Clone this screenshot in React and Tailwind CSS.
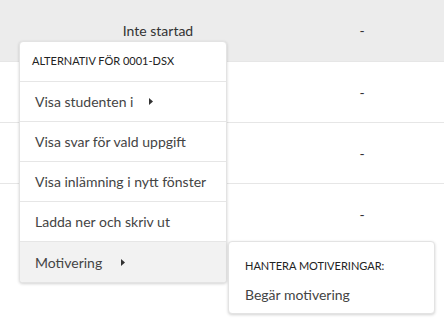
import React from 'react';

const rows = [
  { status: 'Inte startad', grade: '-', shaded: true },
  { status: '', grade: '-' },
  { status: '', grade: '-' },
  { status: '', grade: '-', last: true },
];

const Caret = () => (
  <svg width="4" height="7" viewBox="0 0 4 7" className="inline-block">
    <path d="M0 0 L4 3.5 L0 7 Z" fill="#333" />
  </svg>
);

const items = [
  { label: 'Visa studenten i', caret: true },
  { label: 'Visa svar för vald uppgift' },
  { label: 'Visa inlämning i nytt fönster' },
  { label: 'Ladda ner och skriv ut' },
];

export default function App() {
  return (
    <div
      className="relative w-[444px] h-[320px] overflow-hidden bg-white text-[#333]"
      style={{ fontFamily: 'Lato, "Open Sans", sans-serif' }}
    >
      {rows.map((row, i) => (
        <div
          key={i}
          className={`grid grid-cols-[88px_140px_52px_1fr] items-center text-[14px] ${
            row.shaded ? 'bg-[#ececec] h-[62px]' : 'bg-white h-[61px]'
          } ${row.last ? '' : 'border-b border-[#e6e6e6]'}`}
        >
          <div />
          <div className="text-center">{row.status}</div>
          <div />
          <div className="text-center">{row.grade}</div>
        </div>
      ))}

      <div className="absolute left-[19px] top-[41px] w-[208px] bg-white rounded-[4px] border border-[#e3e3e3] shadow-[0_1px_3px_rgba(0,0,0,0.18)] overflow-hidden">
        <div className="h-[40px] flex items-center pl-[12px] text-[11px] text-[#222] border-b border-[#e6e6e6]">
          ALTERNATIV FÖR 0001-DSX
        </div>
        {items.map((item) => (
          <div
            key={item.label}
            className="h-[40px] flex items-center pl-[15px] text-[14px] text-[#444] border-b border-[#e6e6e6]"
          >
            {item.label}
            {item.caret && (
              <span className="ml-[16px] flex items-center">
                <Caret />
              </span>
            )}
          </div>
        ))}
        <div className="h-[40px] flex items-center pl-[15px] text-[14px] text-[#444] bg-[#f2f2f2]">
          Motivering
          <span className="ml-[19px] flex items-center">
            <Caret />
          </span>
        </div>
      </div>

      <div className="absolute left-[228px] top-[241px] w-[207px] h-[73px] bg-white rounded-[4px] border border-[#e3e3e3] shadow-[0_1px_3px_rgba(0,0,0,0.18)] flex flex-col">
        <div className="h-[38px] flex items-end pb-[6px] pl-[16px] text-[11px] text-[#222]">
          HANTERA MOTIVERINGAR:
        </div>
        <div className="flex-1 flex items-center pl-[16px] text-[14px] text-[#444] pb-[4px]">
          Begär motivering
        </div>
      </div>
    </div>
  );
}
